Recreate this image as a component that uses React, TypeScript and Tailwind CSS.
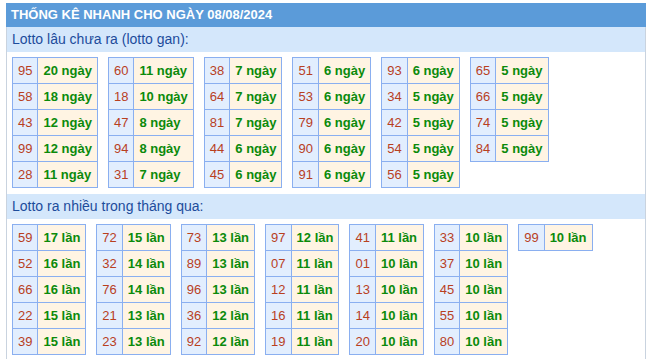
import React from 'react';

type Row = [string, number];

const ganTables: Row[][] = [
  [['95', 20], ['58', 18], ['43', 12], ['99', 12], ['28', 11]],
  [['60', 11], ['18', 10], ['47', 8], ['94', 8], ['31', 7]],
  [['38', 7], ['64', 7], ['81', 7], ['44', 6], ['45', 6]],
  [['51', 6], ['53', 6], ['79', 6], ['90', 6], ['91', 6]],
  [['93', 6], ['34', 5], ['42', 5], ['54', 5], ['56', 5]],
  [['65', 5], ['66', 5], ['74', 5], ['84', 5]],
];

const hotTables: Row[][] = [
  [['59', 17], ['52', 16], ['66', 16], ['22', 15], ['39', 15]],
  [['72', 15], ['32', 14], ['76', 14], ['21', 13], ['23', 13]],
  [['73', 13], ['89', 13], ['96', 13], ['36', 12], ['92', 12]],
  [['97', 12], ['07', 11], ['12', 11], ['16', 11], ['19', 11]],
  [['41', 11], ['01', 10], ['13', 10], ['14', 10], ['20', 10]],
  [['33', 10], ['37', 10], ['45', 10], ['55', 10], ['80', 10]],
  [['99', 10]],
];

function LottoTable({ rows, unit }: { rows: Row[]; unit: string }) {
  return (
    <table className="border-collapse text-[13px] leading-[15px]">
      <tbody>
        {rows.map(([num, count]) => (
          <tr key={num}>
            <td className="border border-[#8aaff0] bg-[#e2eefe] px-[5px] py-[5px] text-center text-[#b8401f]">
              {num}
            </td>
            <td className="border border-[#8aaff0] bg-[#fff4e3] px-[5px] py-[5px] font-bold text-[#0b8a0b] whitespace-nowrap">
              {count} {unit}
            </td>
          </tr>
        ))}
      </tbody>
    </table>
  );
}

function SubHeader({ children }: { children: React.ReactNode }) {
  return (
    <div className="bg-[#d4e7fb] h-[25px] flex items-center pl-[5px] text-[14px] text-[#1d4c9c]">
      {children}
    </div>
  );
}

export default function App() {
  return (
    <div className="bg-white w-[654px] h-[359px] pt-[3px] font-['Liberation_Sans',Arial,sans-serif]">
      <div className="ml-[6px] w-[640px]">
        <div className="bg-[#5b9bd9] h-[24px] flex items-center pl-[5px] text-white font-bold text-[13px]">
          THỐNG KÊ NHANH CHO NGÀY 08/08/2024
        </div>
        <div className="border-x border-[#c9d3df] h-[332px]">
          <SubHeader>Lotto lâu chưa ra (lotto gan):</SubHeader>
          <div className="flex items-start gap-[10px] pl-[5px] pt-[5px] pb-[6px]">
            {ganTables.map((t, i) => (
              <LottoTable key={i} rows={t} unit="ngày" />
            ))}
          </div>
          <SubHeader>Lotto ra nhiều trong tháng qua:</SubHeader>
          <div className="flex items-start gap-[10px] pl-[5px] pt-[5px]">
            {hotTables.map((t, i) => (
              <LottoTable key={i} rows={t} unit="lần" />
            ))}
          </div>
        </div>
      </div>
    </div>
  );
}
